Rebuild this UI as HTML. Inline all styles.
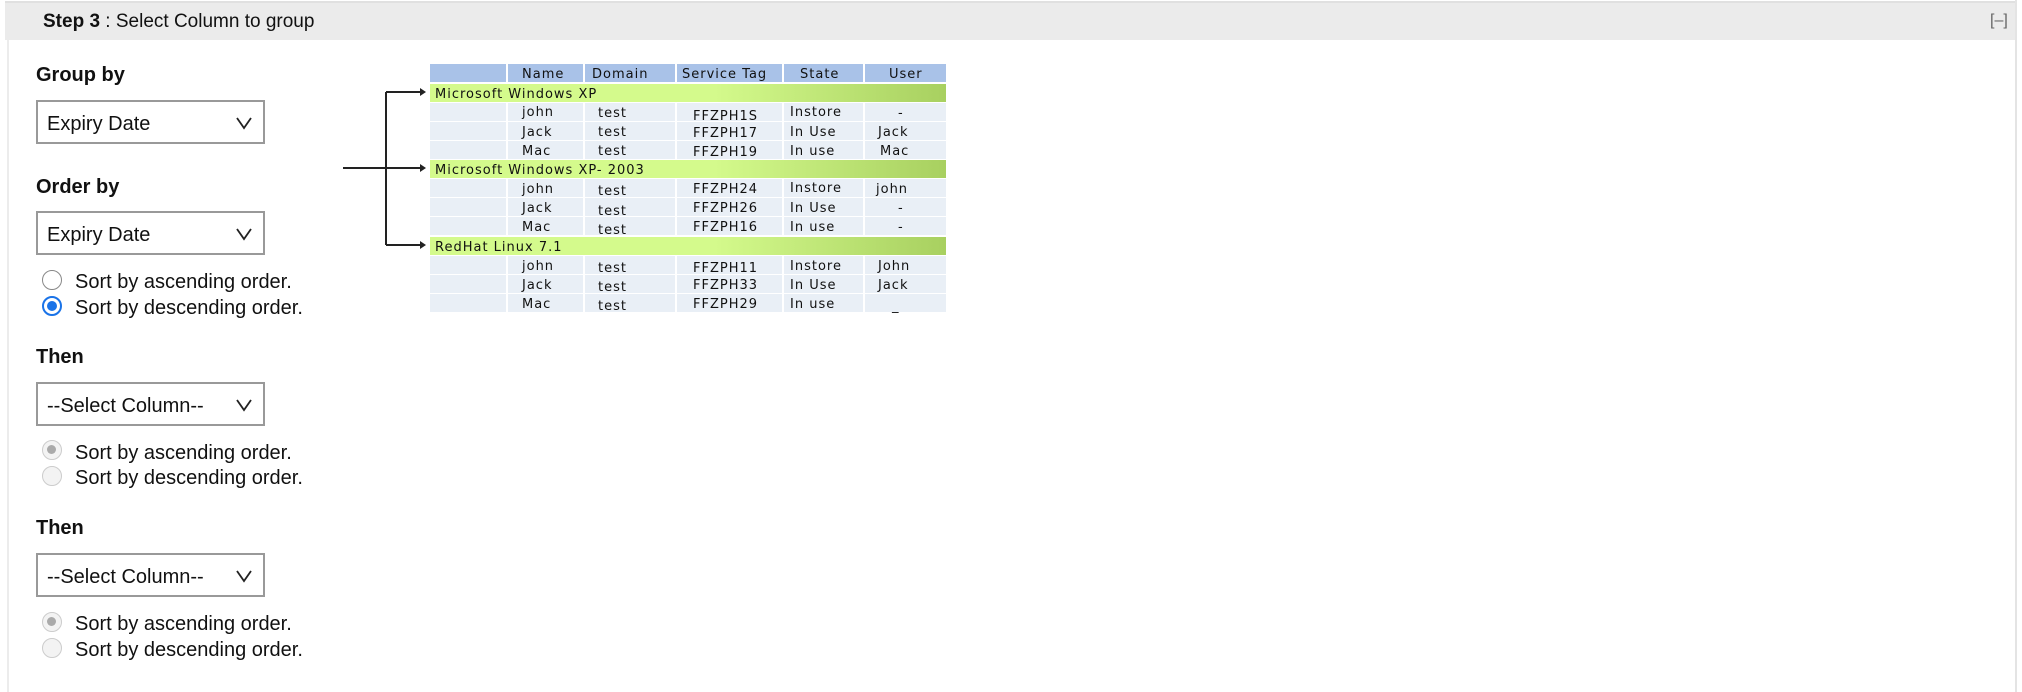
<!DOCTYPE html>
<html><head><style>
*{margin:0;padding:0;box-sizing:border-box}
body{width:2022px;height:692px;background:#fff;font-family:"Liberation Sans",sans-serif;color:#111;position:relative;overflow:hidden}
.a{position:absolute;white-space:nowrap}
.hdr{left:5px;top:1px;width:2010px;height:39px;background:#ebebeb;border-top:2px solid #e0e0e0}
.lb{left:7px;top:40px;width:2px;height:652px;background:#ececec}
.rb{left:2015px;top:0;width:2px;height:692px;background:#e4e4e4}
.lab{font-weight:bold;font-size:20px}
.sel{width:229px;height:44px;border:2px solid #999;background:#fff;font-size:20px;padding:11px 0 0 9px}
.sel svg{position:absolute;right:10px;top:14px}
.rad{width:20px;height:20px;border-radius:50%;border:1.5px solid #888;background:#fff}
.rad.on{border:2px solid #1a73e8}
.rad.on::after{content:"";position:absolute;left:3px;top:3px;width:10px;height:10px;border-radius:50%;background:#1a73e8}
.rad.dis{border-color:#ccc;background:#f3f3f3}
.rad.dison::after{content:"";position:absolute;left:4px;top:4px;width:9px;height:9px;border-radius:50%;background:#aaa}
.rt{font-size:20px}
.tb{font-family:"DejaVu Sans",sans-serif;font-size:13px;letter-spacing:1px;fill:#111}
</style></head><body>
<div class="a hdr"></div>
<div class="a lb"></div><div class="a rb"></div>
<div class="a" style="left:43px;top:11px;font-size:19px"><b>Step 3</b> : Select Column to group</div>
<div class="a" style="left:1990px;top:12px;font-size:16px;color:#666">[–]</div>

<div class="a lab" style="left:36px;top:64px">Group by</div>
<div class="a sel" style="left:36px;top:100px">Expiry Date<svg width="18" height="14"><path d="M2 2l7 10 7-10" stroke="#222" stroke-width="1.8" fill="none"/></svg></div>
<div class="a lab" style="left:36px;top:176px">Order by</div>
<div class="a sel" style="left:36px;top:211px">Expiry Date<svg width="18" height="14"><path d="M2 2l7 10 7-10" stroke="#222" stroke-width="1.8" fill="none"/></svg></div>
<div class="a rad" style="left:42px;top:270px"></div><div class="a rt" style="left:75px;top:271px">Sort by ascending order.</div>
<div class="a rad on" style="left:42px;top:296px"></div><div class="a rt" style="left:75px;top:297px">Sort by descending order.</div>

<div class="a lab" style="left:36px;top:346px">Then</div>
<div class="a sel" style="left:36px;top:382px">--Select Column--<svg width="18" height="14"><path d="M2 2l7 10 7-10" stroke="#222" stroke-width="1.8" fill="none"/></svg></div>
<div class="a rad dis dison" style="left:42px;top:440px"></div><div class="a rt" style="left:75px;top:442px">Sort by ascending order.</div>
<div class="a rad dis" style="left:42px;top:466px"></div><div class="a rt" style="left:75px;top:467px">Sort by descending order.</div>

<div class="a lab" style="left:36px;top:517px">Then</div>
<div class="a sel" style="left:36px;top:553px">--Select Column--<svg width="18" height="14"><path d="M2 2l7 10 7-10" stroke="#222" stroke-width="1.8" fill="none"/></svg></div>
<div class="a rad dis dison" style="left:42px;top:612px"></div><div class="a rt" style="left:75px;top:613px">Sort by ascending order.</div>
<div class="a rad dis" style="left:42px;top:638px"></div><div class="a rt" style="left:75px;top:639px">Sort by descending order.</div>

<svg class="a" style="left:340px;top:60px" width="620" height="260">
<defs><linearGradient id="g" x1="0" x2="1"><stop offset="0.55" stop-color="#d4fa8c"/><stop offset="1" stop-color="#a8d060"/></linearGradient></defs>
<path d="M46 32V185M46 32H80M46 108H80M46 185H80M3 108H46" stroke="#222" stroke-width="2" fill="none"/>
<path d="M80 28l6 4-6 4zM80 104l6 4-6 4zM80 181l6 4-6 4z" fill="#222"/>
<rect x="90" y="4" width="516" height="18" fill="#a9c2e8"/>
<g fill="#e9eff6">
<rect x="90" y="43" width="516" height="18"/><rect x="90" y="62" width="516" height="18"/><rect x="90" y="81" width="516" height="18"/>
<rect x="90" y="119" width="516" height="18"/><rect x="90" y="138" width="516" height="18"/><rect x="90" y="157" width="516" height="18"/>
<rect x="90" y="196" width="516" height="18"/><rect x="90" y="215" width="516" height="18"/><rect x="90" y="234" width="516" height="18"/>
</g>
<rect x="90" y="24" width="516" height="18" fill="url(#g)"/>
<rect x="90" y="100" width="516" height="18" fill="url(#g)"/>
<rect x="90" y="177" width="516" height="18" fill="url(#g)"/>
<g stroke="#fff" stroke-width="2"><path d="M167 4v18M244 4v18M336 4v18M443 4v18M524 4v18M167 43v56M244 43v56M336 43v56M443 43v56M524 43v56M167 119v56M244 119v56M336 119v56M443 119v56M524 119v56M167 196v56M244 196v56M336 196v56M443 196v56M524 196v56"/></g>
<g class="tb">
<text x="182" y="18">Name</text><text x="252" y="18">Domain</text><text x="342" y="18">Service Tag</text><text x="460" y="18">State</text><text x="549" y="18">User</text>
<text x="95" y="38">Microsoft Windows XP</text>
<text x="182" y="56">john</text><text x="258" y="57">test</text><text x="353" y="60">FFZPH1S</text><text x="450" y="56">Instore</text><text x="558" y="57">-</text>
<text x="182" y="76">Jack</text><text x="258" y="76">test</text><text x="353" y="77">FFZPH17</text><text x="450" y="76">In Use</text><text x="538" y="76">Jack</text>
<text x="182" y="95">Mac</text><text x="258" y="95">test</text><text x="353" y="96">FFZPH19</text><text x="450" y="95">In use</text><text x="540" y="95">Mac</text>
<text x="95" y="114">Microsoft Windows XP- 2003</text>
<text x="182" y="133">john</text><text x="258" y="135">test</text><text x="353" y="133">FFZPH24</text><text x="450" y="132">Instore</text><text x="536" y="133">john</text>
<text x="182" y="152">Jack</text><text x="258" y="155">test</text><text x="353" y="152">FFZPH26</text><text x="450" y="152">In Use</text><text x="558" y="152">-</text>
<text x="182" y="171">Mac</text><text x="258" y="174">test</text><text x="353" y="171">FFZPH16</text><text x="450" y="171">In use</text><text x="558" y="171">-</text>
<text x="95" y="191">RedHat Linux 7.1</text>
<text x="182" y="210">john</text><text x="258" y="212">test</text><text x="353" y="212">FFZPH11</text><text x="450" y="210">Instore</text><text x="538" y="210">John</text>
<text x="182" y="229">Jack</text><text x="258" y="231">test</text><text x="353" y="229">FFZPH33</text><text x="450" y="229">In Use</text><text x="538" y="229">Jack</text>
<text x="182" y="248">Mac</text><text x="258" y="250">test</text><text x="353" y="248">FFZPH29</text><text x="450" y="248">In use</text><text x="552" y="250">_</text>
</g>
</svg>
</body></html>
